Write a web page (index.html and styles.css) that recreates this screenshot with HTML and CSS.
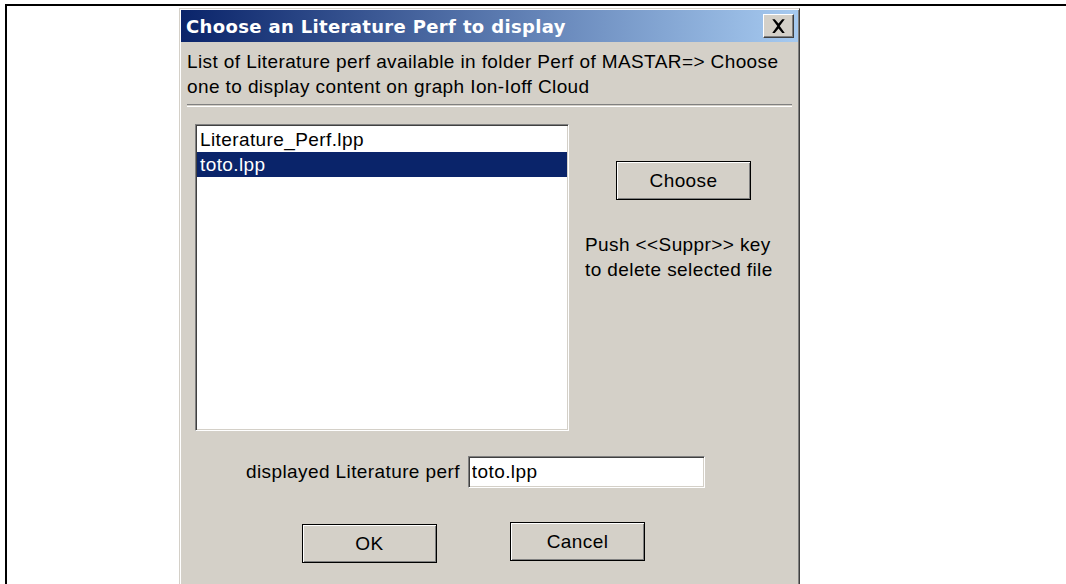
FILE: index.html
```html
<!DOCTYPE html>
<html>
<head>
<meta charset="utf-8">
<title>Choose an Literature Perf to display</title>
<link rel="stylesheet" href="styles.css">
</head>
<body>
<div class="frame">
  <div class="dialog">
    <div class="titlebar">
      <span class="title">Choose an Literature Perf to display</span>
      <button class="close" type="button" aria-label="Close">
        <svg width="12" height="11" viewBox="0 0 12 11"><path d="M1 0h2l3 3.5L9 0h2L7 5.5 11 11H9L6 7.5 3 11H1l4-5.5z" fill="#000"/></svg>
      </button>
    </div>
    <p class="intro">List of Literature perf available in folder Perf of MASTAR=&gt; Choose one to display content on graph Ion-Ioff Cloud</p>
    <div class="separator"></div>
    <div class="main">
      <ul class="listbox">
        <li>Literature_Perf.lpp</li>
        <li class="selected">toto.lpp</li>
      </ul>
      <div class="side">
        <button class="btn choose" type="button">Choose</button>
        <p class="hint">Push &lt;&lt;Suppr&gt;&gt; key<br>to delete selected file</p>
      </div>
    </div>
    <div class="field">
      <label class="field-label" for="perf">displayed Literature perf</label>
      <input id="perf" class="textbox" type="text" value="toto.lpp">
    </div>
    <div class="actions">
      <button class="btn ok" type="button">OK</button>
      <button class="btn cancel" type="button">Cancel</button>
    </div>
  </div>
</div>
</body>
</html>
```

FILE: styles.css
```css
html, body {
  margin: 0;
  padding: 0;
  background: #fff;
  height: 100%;
  overflow: hidden;
}

body {
  font-family: "Liberation Sans", Arial, sans-serif;
  font-size: 19px;
  letter-spacing: 0.4px;
  color: #000;
}

/* page frame: a rule along the top and left edges */
.frame {
  margin: 4px 0 0 5px;
  border-top: 2px solid #000;
  border-left: 2px solid #000;
  height: 100%;
  padding: 2px 0 0 172px;
  box-sizing: border-box;
}

/* classic raised window */
.dialog {
  width: 621px;
  height: 600px;
  box-sizing: border-box;
  background: #d4d0c8;
  border: 1px solid;
  border-color: #d4d0c8 #404040 #404040 #d4d0c8;
  box-shadow: inset 1px 1px #fff, inset -1px -1px #808080;
  padding: 1px;
}

.titlebar {
  height: 32px;
  background: linear-gradient(to right, #0a246a, #a6caf0);
  display: flex;
  align-items: center;
  justify-content: space-between;
  padding: 0 4px 0 5px;
}

.title {
  color: #fff;
  font-family: "DejaVu Sans", Verdana, sans-serif;
  font-weight: bold;
  font-size: 18px;
  letter-spacing: 0.35px;
}

.close {
  width: 31px;
  height: 24px;
  padding: 0;
  margin: 0;
  background: #d4d0c8;
  border: 1px solid;
  border-color: #fff #404040 #404040 #fff;
  box-shadow: inset -1px -1px #808080;
  display: flex;
  align-items: center;
  justify-content: center;
}

.close svg {
  width: 15px;
  height: 14px;
}

.intro {
  margin: 7px 0 0 6px;
  line-height: 25px;
  width: 608px;
}

/* etched horizontal rule */
.separator {
  margin: 5px 6px 0 6px;
  height: 1px;
  border-top: 1px solid #808080;
  border-bottom: 1px solid #fff;
}

.main {
  display: flex;
  margin-top: 17px;
  padding-left: 14px;
}

.listbox {
  list-style: none;
  margin: 0;
  padding: 3px 1px 1px;
  width: 374px;
  height: 307px;
  box-sizing: border-box;
  background: #fff;
  border: 1px solid;
  border-color: #808080 #fff #fff #808080;
  box-shadow: inset 1px 1px #404040, inset -1px -1px #d4d0c8;
}

.listbox li {
  height: 24px;
  line-height: 24px;
  padding-left: 3px;
}

.listbox li.selected {
  background: #0a246a;
  color: #fff;
  height: 25px;
  line-height: 25px;
}

.side {
  margin-left: 16px;
  display: flex;
  flex-direction: column;
}

.btn {
  font-family: "Liberation Sans", Arial, sans-serif;
  font-size: 19px;
  letter-spacing: 0.4px;
  color: #000;
  width: 135px;
  height: 39px;
  padding: 0;
  background: #d4d0c8;
  border: 1px solid #000;
  box-shadow: inset 1px 1px #fff, inset -1px -1px #808080;
}

.choose {
  margin: 37px 0 0 31px;
}

.hint {
  margin: 32px 0 0 0;
  line-height: 25px;
}

.field {
  display: flex;
  align-items: center;
  margin-top: 25px;
  padding-left: 65px;
}

.field-label {
  margin-right: 8px;
}

.textbox {
  font-family: "Liberation Sans", Arial, sans-serif;
  font-size: 19px;
  letter-spacing: 0.4px;
  width: 237px;
  height: 32px;
  box-sizing: border-box;
  padding: 0 3px;
  margin: 0;
  background: #fff;
  border: 1px solid;
  border-color: #808080 #fff #fff #808080;
  box-shadow: inset 1px 1px #404040, inset -1px -1px #d4d0c8;
  outline: none;
}

.actions {
  display: flex;
  align-items: flex-start;
  margin-top: 34px;
  padding-left: 121px;
}

.ok {
  margin-top: 2px;
}

.cancel {
  margin-left: 73px;
}
```
